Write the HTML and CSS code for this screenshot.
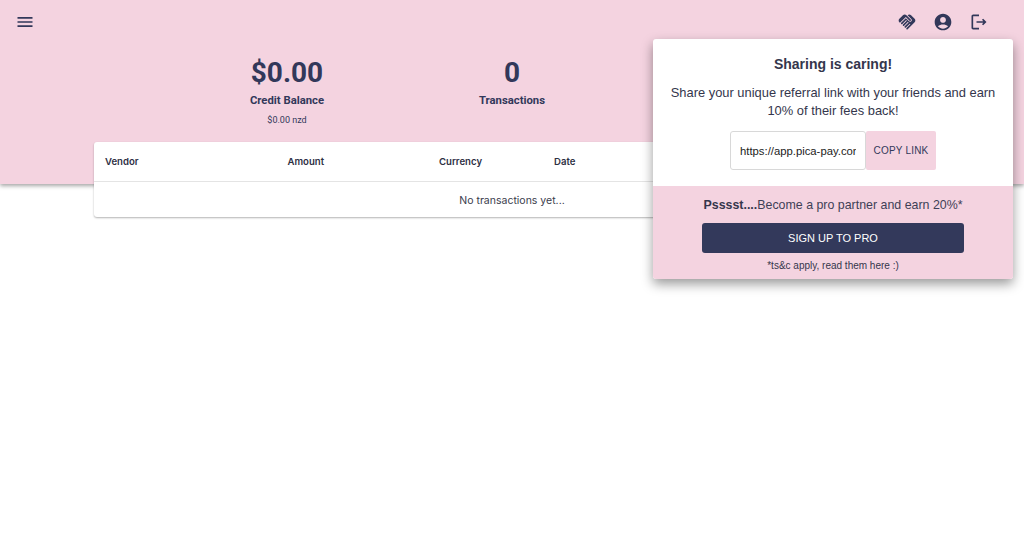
FILE: index.html
```html
<!DOCTYPE html>
<html lang="en">
<head>
    <meta charset="UTF-8">
    <meta name="viewport" content="width=device-width, initial-scale=1.0">
    <title>Dashboard</title>
    <link rel="stylesheet" href="styles.css">
</head>
<body>
    <header class="banner">
        <div class="toolbar">
            <button class="icon-btn menu-btn" aria-label="Menu">
                <svg viewBox="0 0 24 24"><path d="M3 18h18v-2H3v2zm0-5h18v-2H3v2zm0-7v2h18V6H3z"/></svg>
            </button>
            <div class="toolbar-actions">
                <button class="icon-btn" aria-label="Referrals">
                    <svg viewBox="0 0 24 24"><path d="M16.48 10.41c-.39.39-1.04.39-1.43 0l-4.47-4.46-7.05 7.04-.66-.63c-1.17-1.17-1.17-3.07 0-4.24l4.24-4.24c1.17-1.17 3.07-1.17 4.24 0L16.48 9c.39.39.39 1.02 0 1.41zm.7-2.12c.78.78.78 2.05 0 2.83-1.27 1.27-2.61.22-2.83 0l-3.76-3.76-5.57 5.57c-.39.39-.39 1.02 0 1.41.39.39 1.02.39 1.42 0l4.62-4.62.71.71-4.62 4.62c-.39.39-.39 1.02 0 1.41.39.39 1.02.39 1.42 0l4.62-4.62.71.71-4.62 4.62c-.39.39-.39 1.02 0 1.41.39.39 1.02.39 1.41 0l4.62-4.62.71.71-4.62 4.62c-.39.39-.39 1.02 0 1.41.39.39 1.02.39 1.41 0l8.32-8.34c1.17-1.17 1.17-3.07 0-4.24l-4.24-4.24c-1.15-1.15-3.01-1.17-4.18-.06l4.47 4.47z"/></svg>
                </button>
                <button class="icon-btn" aria-label="Account">
                    <svg viewBox="0 0 24 24"><path d="M12 2C6.48 2 2 6.48 2 12s4.48 10 10 10 10-4.48 10-10S17.52 2 12 2zm0 4c1.93 0 3.5 1.57 3.5 3.5S13.93 13 12 13s-3.5-1.57-3.5-3.5S10.07 6 12 6zm0 14c-2.03 0-4.43-.82-6.14-2.88C7.55 15.8 9.68 15 12 15s4.45.8 6.14 2.12C16.43 19.18 14.03 20 12 20z"/></svg>
                </button>
                <button class="icon-btn" aria-label="Log out">
                    <svg viewBox="0 0 24 24"><path d="M17 8l-1.41 1.41L17.17 11H9v2h8.17l-1.58 1.58L17 16l4-4-4-4zM5 5h7V3H5c-1.1 0-2 .9-2 2v14c0 1.1.9 2 2 2h7v-2H5V5z"/></svg>
                </button>
            </div>
        </div>

        <div class="stats">
            <div class="stat">
                <div class="stat-value">$0.00</div>
                <div class="stat-label">Credit Balance</div>
                <div class="stat-note">$0.00 nzd</div>
            </div>
            <div class="stat">
                <div class="stat-value">0</div>
                <div class="stat-label">Transactions</div>
            </div>
        </div>
    </header>

    <section class="table-card">
        <div class="table-row table-head">
            <span class="col-vendor">Vendor</span>
            <span class="col-amount">Amount</span>
            <span class="col-currency">Currency</span>
            <span class="col-date">Date</span>
        </div>
        <div class="table-empty">No transactions yet...</div>
    </section>

    <aside class="share-popup">
        <div class="share-top">
            <h2 class="share-title">Sharing is caring!</h2>
            <p class="share-text">Share your unique referral link with your friends and earn 10% of their fees back!</p>
            <div class="share-link">
                <input class="link-input" type="text" value="https://app.pica-pay.com/signup" readonly>
                <button class="copy-btn">Copy link</button>
            </div>
        </div>
        <div class="share-bottom">
            <p class="pro-text"><strong>Psssst....</strong>Become a pro partner and earn 20%*</p>
            <button class="pro-btn">Sign up to pro</button>
            <p class="pro-terms">*ts&amp;c apply, read them here :)</p>
        </div>
    </aside>
</body>
</html>
```

FILE: styles.css
```css
body {
    margin: 0;
    min-height: 100vh;
    background: #fff;
    color: #32385a;
    font-family: Roboto, sans-serif;
    overflow: hidden;
}

.banner {
    height: 184px;
    box-sizing: border-box;
    background: #f4d3e0;
    box-shadow: 0 2px 4px rgba(0, 0, 0, 0.35);
}

.toolbar {
    display: flex;
    justify-content: space-between;
    align-items: center;
    padding: 12px 35px 0 15px;
}

.toolbar-actions {
    display: flex;
    gap: 16px;
}

.icon-btn {
    width: 20px;
    height: 20px;
    padding: 0;
    border: none;
    background: none;
    color: #32385a;
}

.icon-btn svg {
    display: block;
    width: 20px;
    height: 20px;
    fill: currentColor;
}

.stats {
    display: grid;
    grid-template-columns: repeat(3, 225px);
    justify-content: center;
    margin-top: 23px;
    text-align: center;
}

.stat-value {
    font-size: 28px;
    line-height: 36px;
    font-weight: 700;
}

.stat-label {
    margin-top: 2px;
    font-size: 11.3px;
    line-height: 16px;
    font-weight: 700;
}

.stat-note {
    margin-top: 5px;
    font-size: 9px;
    line-height: 12px;
}

.table-card {
    position: relative;
    width: 836px;
    margin: -42px auto 0;
    background: #fff;
    border-radius: 3px;
    box-shadow: 0 1px 2px rgba(0, 0, 0, 0.3);
}

.table-row {
    display: flex;
    height: 39px;
    align-items: center;
    border-bottom: 1px solid #e4e4e4;
    font-family: Inter, sans-serif;
    font-size: 9.6px;
    font-weight: 600;
    color: #2e3044;
}

.col-vendor {
    width: 182.5px;
    padding-left: 11px;
}

.col-amount {
    width: 151.5px;
}

.col-currency {
    width: 115px;
}

.table-empty {
    height: 35px;
    line-height: 37px;
    text-align: center;
    font-family: Inter, sans-serif;
    font-size: 10.5px;
    color: #3a3c4c;
}

.share-popup {
    position: absolute;
    top: 39px;
    left: 653px;
    width: 360px;
    background: #fff;
    border-radius: 3px;
    overflow: hidden;
    box-shadow: 0 5px 12px rgba(0, 0, 0, 0.4);
    font-family: "Liberation Sans", sans-serif;
    color: #34364c;
    text-align: center;
}

.share-top {
    height: 147px;
    padding: 16px 16px 0;
    box-sizing: border-box;
}

.share-title {
    margin: 0;
    font-size: 14px;
    line-height: 18px;
}

.share-text {
    margin: 11px 0 0;
    font-size: 12.9px;
    line-height: 18px;
}

.share-link {
    display: flex;
    justify-content: center;
    margin-top: 11px;
}

.link-input {
    width: 136px;
    height: 39px;
    box-sizing: border-box;
    padding: 0 9px;
    border: 1px solid #d8d8d8;
    border-radius: 3px;
    font-family: "Liberation Sans", sans-serif;
    font-size: 11.3px;
    color: #222;
}

.copy-btn {
    width: 70px;
    height: 39px;
    padding: 0;
    border: none;
    border-radius: 2px;
    background: #f4d3e0;
    font-family: "Liberation Sans", sans-serif;
    font-size: 10px;
    letter-spacing: 0.2px;
    text-transform: uppercase;
    color: #32385a;
}

.share-bottom {
    height: 93px;
    padding-top: 10px;
    box-sizing: border-box;
    background: #f4d3e0;
}

.pro-text {
    margin: 0;
    font-size: 12.4px;
    line-height: 18px;
    color: #3e4056;
}

.pro-text strong {
    color: #34364c;
}

.pro-btn {
    display: block;
    width: 262px;
    height: 30px;
    margin: 9px auto 0;
    border: none;
    border-radius: 3px;
    background: #33395b;
    font-family: "Liberation Sans", sans-serif;
    font-size: 11px;
    text-transform: uppercase;
    color: #fff;
}

.pro-terms {
    margin: 6px 0 0;
    font-size: 10px;
    line-height: 13px;
}
```
